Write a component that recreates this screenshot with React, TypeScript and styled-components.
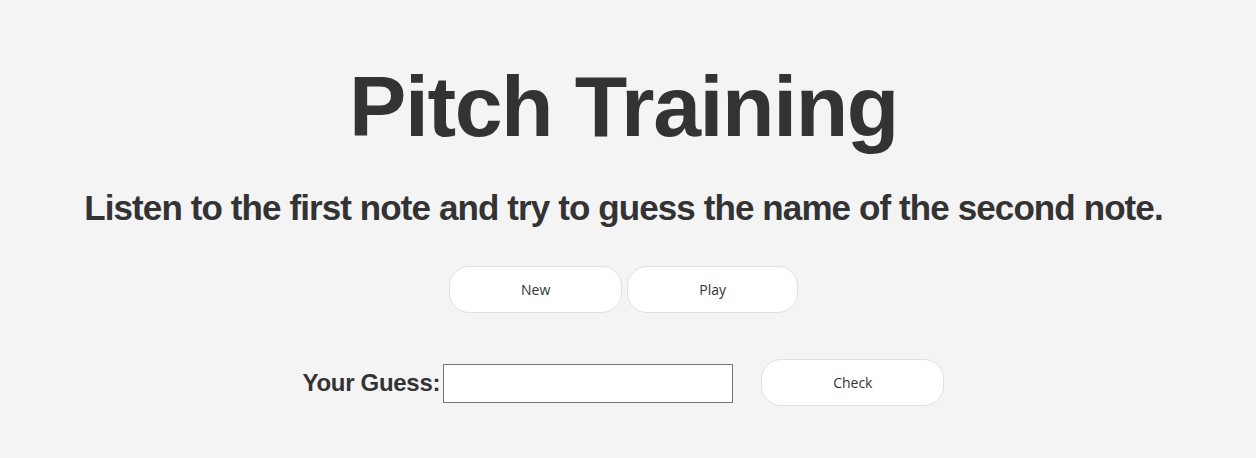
import React from "react";
import styled, { createGlobalStyle } from "styled-components";

const Global = createGlobalStyle`
  html, body { margin: 0; padding: 0; background: #f4f4f4; }
  body { font-family: "Liberation Sans", Arial, sans-serif; color: #333; }
`;

const Page = styled.main`
  display: flex;
  flex-direction: column;
  align-items: center;
  padding: 56px 9px 0 0;
`;

const Title = styled.h1`
  margin: 0;
  font-family: "Liberation Sans", Arial, sans-serif;
  font-weight: 700;
  font-size: 86px;
  letter-spacing: -1.4px;
  line-height: 100px;
  color: #333;
`;

const Subtitle = styled.h2`
  margin: 32px 0 0;
  font-family: "Liberation Sans", Arial, sans-serif;
  font-weight: 700;
  font-size: 35px;
  letter-spacing: -0.9px;
  line-height: 40px;
  color: #333;
`;

const Row = styled.div<{ $gap: number; $mt: number }>`
  display: flex;
  align-items: center;
  gap: ${(p) => p.$gap}px;
  margin-top: ${(p) => p.$mt}px;
`;

const Button = styled.button`
  height: 47px;
  padding: 0 71px;
  border-radius: 20px;
  border: 1px solid #e0e0e0;
  background: #fff;
  color: #333;
  font-family: "Open Sans", sans-serif;
  font-size: 14px;
  cursor: pointer;
`;

const Label = styled.label`
  font-family: "Liberation Sans", Arial, sans-serif;
  font-weight: 700;
  font-size: 24px;
  letter-spacing: -0.3px;
  color: #333;
`;

const Input = styled.input`
  width: 290px;
  height: 39px;
  box-sizing: border-box;
  border: 1px solid #767676;
  background: #fff;
  margin: 2px 28px 0 3px;
`;

export default function App() {
  return (
    <>
      <Global />
      <Page>
        <Title>Pitch Training</Title>
        <Subtitle>Listen to the first note and try to guess the name of the second note.</Subtitle>
        <Row $mt={38} $gap={5}>
          <Button>New</Button>
          <Button>Play</Button>
        </Row>
        <Row $mt={46} $gap={0}>
          <Label htmlFor="guess">Your Guess:</Label>
          <Input id="guess" />
          <Button>Check</Button>
        </Row>
      </Page>
    </>
  );
}
